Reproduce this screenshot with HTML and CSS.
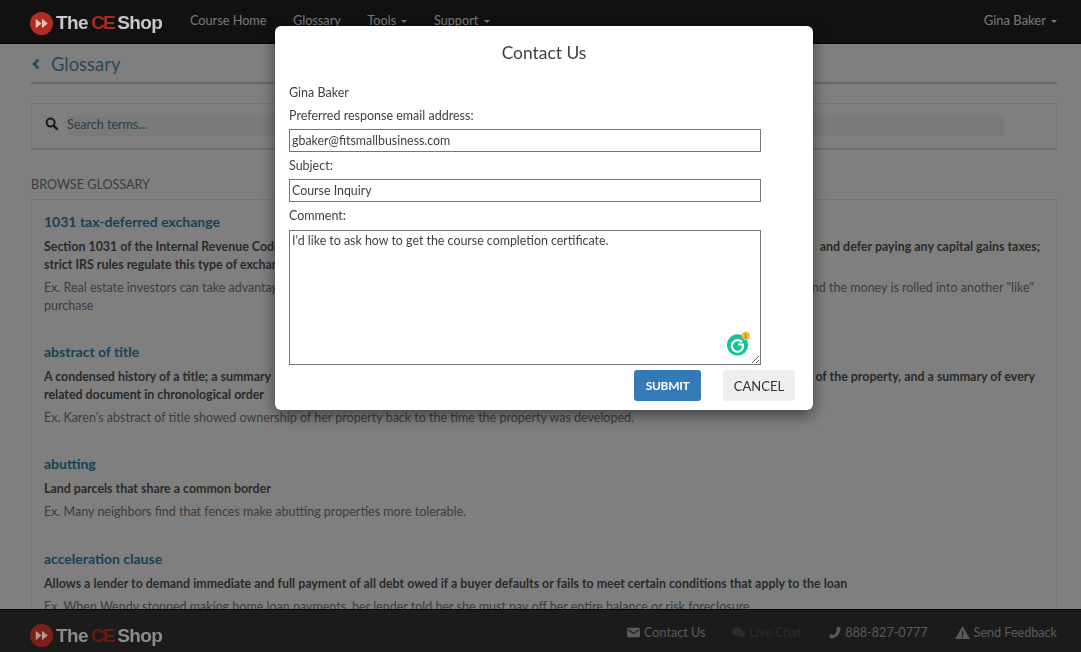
FILE: index.html
```html
<!DOCTYPE html>
<html lang="en">
<head>
<meta charset="utf-8">
<title>Glossary</title>
<link rel="stylesheet" href="styles.css">
</head>
<body>
<div class="page">
  <header class="navbar">
    <div class="logo"><svg class="logo-mark" viewBox="0 0 24 24"><circle cx="12" cy="12" r="12" fill="currentColor"/><path d="M6 7l6 5-6 5zM12.500 7l6 5-6 5z" fill="#e3c4bc"/></svg><span class="logo-text">The <b>CE</b> Shop</span></div>
    <nav class="nav-links">
      <span>Course Home</span><span>Glossary</span><span>Tools <i class="caret"></i></span><span>Support <i class="caret"></i></span>
    </nav>
    <span class="nav-user">Gina Baker <i class="caret"></i></span>
  </header>
  <main class="content">
    <div class="title-row">
      <svg class="chev" viewBox="0 0 10 14"><path d="M7.500 2.500L3 7l4.500 4.500" fill="none" stroke="#4f9ac8" stroke-width="2.800"/></svg>
      <h1>Glossary</h1>
    </div>
    <div class="search-card">
      <svg class="search-icon" viewBox="0 0 14 14"><circle cx="5.600" cy="5.600" r="4" fill="none" stroke="#333" stroke-width="2"/><path d="M8.600 8.600l4 4" stroke="#333" stroke-width="2.400"/></svg>
      <div class="search-input">Search terms...</div>
    </div>
    <h2 class="browse">BROWSE GLOSSARY</h2>
    <section class="terms">
      <article class="term">
        <h3>1031 tax-deferred exchange</h3>
        <p class="def split r-def"><span>Section 1031 of the Internal Revenue Code</span><span>and defer paying any capital gains taxes;</span></p>
        <p class="def">strict IRS rules regulate this type of exchange</p>
        <p class="ex split first r-ex"><span>Ex. Real estate investors can take advantage</span><span>nd the money is rolled into another "like"</span></p>
        <p class="ex">purchase</p>
      </article>
      <article class="term">
        <h3>abstract of title</h3>
        <p class="def split r-ab"><span>A condensed history of a title; a summary</span><span>of the property, and a summary of every</span></p>
        <p class="def">related document in chronological order</p>
        <p class="ex first">Ex. Karen's abstract of title showed ownership of her property back to the time the property was developed.</p>
      </article>
      <article class="term">
        <h3>abutting</h3>
        <p class="def">Land parcels that share a common border</p>
        <p class="ex first">Ex. Many neighbors find that fences make abutting properties more tolerable.</p>
      </article>
      <article class="term">
        <h3>acceleration clause</h3>
        <p class="def">Allows a lender to demand immediate and full payment of all debt owed if a buyer defaults or fails to meet certain conditions that apply to the loan</p>
        <p class="ex first">Ex. When Wendy stopped making home loan payments, her lender told her she must pay off her entire balance or risk foreclosure.</p>
      </article>
    </section>
  </main>
  <footer class="footer">
    <div class="logo foot-logo"><svg class="logo-mark" viewBox="0 0 24 24"><circle cx="12" cy="12" r="12" fill="currentColor"/><path d="M6 7l6 5-6 5zM12.500 7l6 5-6 5z" fill="#b09a94"/></svg><span class="logo-text">The <b>CE</b> Shop</span></div>
    <div class="foot-links">
      <span><svg class="ficon" viewBox="0 0 14 12"><rect y="1" width="14" height="10" rx="1.500" fill="currentColor"/><path d="M1 3l6 4 6-4" fill="none" stroke="#363636" stroke-width="1.200"/></svg>Contact Us</span>
      <span class="dim"><svg class="ficon" viewBox="0 0 14 12"><ellipse cx="5.500" cy="5" rx="5.500" ry="4.500" fill="currentColor"/><ellipse cx="10" cy="7.500" rx="4" ry="3.500" fill="currentColor"/></svg>Live Chat</span>
      <span><svg class="ficon" viewBox="0 0 14 14"><path d="M11 .5l2.500 1c.5 6-5 12-11 12l-1.500-3 3-2 1.500 1.500c2-1 3.500-3 4-5L8.500 3.500z" fill="currentColor"/></svg>888-827-0777</span>
      <span><svg class="ficon warn" viewBox="0 0 16 14"><path d="M8 0l8 14H0z" fill="currentColor"/><path d="M8 5v5M8 11v1.500" stroke="#363636" stroke-width="1.500"/></svg>Send Feedback</span>
    </div>
  </footer>
</div>
<div class="backdrop"></div>
<div class="modal">
  <h4>Contact Us</h4>
  <div class="modal-name">Gina Baker</div>
  <label class="field-label">Preferred response email address:</label>
  <div class="input">gbaker@fitsmallbusiness.com</div>
  <label class="field-label">Subject:</label>
  <div class="input">Course Inquiry</div>
  <label class="field-label">Comment:</label>
  <div class="textarea">I'd like to ask how to get the course completion certificate.
    <svg class="grammarly" viewBox="0 0 26 26"><circle cx="12" cy="14.500" r="11" fill="#15c39a"/><path d="M16.500 11.500a6 6 0 1 0 1 6.500V14h-5" fill="none" stroke="#fff" stroke-width="2.200"/><circle cx="20.500" cy="5" r="4.500" fill="#f5b840"/><text x="20.500" y="7.500" class="badge-num">1</text></svg>
    <svg class="grip" viewBox="0 0 10 10"><path d="M9 2L2 9M9 6L6 9" stroke="#666" stroke-width="1"/></svg>
  </div>
  <div class="modal-actions">
    <button class="btn primary">SUBMIT</button>
    <button class="btn plain">CANCEL</button>
  </div>
</div>
</body>
</html>
```
FILE: styles.css
```css
* { box-sizing: border-box; }
html, body { margin: 0; height: 100%; overflow: hidden; }
body { font-family: "Lato", "Liberation Sans", sans-serif; font-size: 12.5px; color: #333; background: #fff; }
.page { height: 652px; display: flex; flex-direction: column; }
.navbar { height: 44px; flex: none; background: #222; border-bottom: 1px solid #000; display: flex; align-items: center; padding: 0 24px 0 30px; color: #eee; }
.logo { position: relative; z-index: 2; display: flex; align-items: center; width: 160px; flex: none; margin-top: 3px; color: #b22a22; }
.logo-mark { width: 23px; height: 23px; flex: none; margin-right: 3px; }
.logo-text { font-family: "Liberation Sans", sans-serif; font-weight: 700; font-size: 19px; letter-spacing: -.6px; word-spacing: -1.500px; color: #c8c8c8; white-space: nowrap; }
.logo-text b { color: #a82a20; letter-spacing: -1.800px; }
.foot-logo { color: #7d201a; margin-top: 9px; }
.foot-logo .logo-text { color: #8c8c8c; }
.foot-logo b { color: #6a1a14; }
.nav-links { display: flex; gap: 26.500px; font-size: 12.700px; margin-top: -4px; }
.nav-user { margin-left: auto; font-size: 13px; margin-top: -4px; }
.caret { display: inline-block; border: 3px solid transparent; border-top-color: currentColor; border-bottom: 0; vertical-align: middle; margin-left: 2px; }
.content { flex: 1; min-height: 0; overflow: hidden; padding: 0 24px 0 31px; }
.title-row { display: flex; align-items: center; height: 40px; padding-top: 1px; border-bottom: 2px solid #ccc; }
.chev { width: 10px; height: 14px; margin-right: 10px; }
h1 { margin: 0; font-size: 18.400px; font-weight: 400; color: #5590b5; }
.search-card { margin-top: 19px; height: 47px; background: #fff; border: 1px solid #e8e8e8; border-bottom: 2px solid #ddd; display: flex; align-items: center; padding: 0 52px 0 13px; }
.search-icon { width: 14px; height: 14px; flex: none; margin: 0 8px 4px 0; }
.search-input { flex: 1; height: 20px; line-height: 17px; background: #f4f4f4; color: #4f7f9f; }
.browse { margin: 26px 0 0; font-size: 12.600px; font-weight: 400; line-height: 17px; color: #777; }
.terms { margin-top: 6px; background: #fff; border: 1px solid #e8e8e8; padding: 0 12px; height: 431px; overflow: hidden; }
.term { height: 130px; padding-top: 12px; }
.term:nth-child(2) { height: 112px; }
.term:nth-child(3) { height: 95px; }
h3 { margin: 0 0 6px; font-size: 14px; line-height: 20px; font-weight: 700; color: #2f83ad; }
p { margin: 0; line-height: 18px; }
.def { font-size: 12.400px; font-weight: 700; color: #555; }
.ex { font-size: 12.500px; color: #7a7a7a; }
.ex.first { margin-top: 5px; }
.split { display: flex; justify-content: space-between; white-space: nowrap; }
.r-def { padding-right: 4px; }
.r-ex { padding-right: 10px; }
.r-ab { padding-right: 9px; }
.footer { height: 43px; flex: none; background: #363636; border-top: 1px solid #000; display: flex; align-items: center; justify-content: space-between; padding: 0 24px 0 30px; }
.foot-links { display: flex; gap: 27px; color: #b4b4b4; font-size: 12.600px; margin-top: 2px; }
.foot-links span { display: flex; align-items: center; }
.foot-links .dim { color: #585858; }
.ficon { width: 13px; height: 13px; margin-right: 4px; }
.ficon.warn { width: 15px; }
.backdrop { position: fixed; inset: 0; background: rgba(0,0,0,.5); z-index: 1; }
.modal { position: fixed; left: 275px; top: 26px; width: 538px; height: 384px; background: #fff; border-radius: 6px; box-shadow: 0 5px 15px rgba(0,0,0,.5); z-index: 3; padding: 0 18px 0 14px; color: #3f3f3f; }
.modal h4 { margin: 0 -18px 0 -14px; height: 53px; line-height: 53px; text-align: center; font-size: 17.400px; font-weight: 400; }
.modal-name { line-height: 20px; height: 23px; margin-top: 4px; }
.field-label { display: block; line-height: 18px; height: 23px; padding-top: 1px; }
.input { width: 472px; height: 23px; border: 1px solid #767676; line-height: 21px; padding: 0 2px; margin-bottom: 4px; font-size: 12.400px; }
.textarea { position: relative; width: 472px; height: 135px; margin-top: 1px; border: 1px solid #767676; padding: 1px 2px; line-height: 18px; font-size: 12.400px; }
.grammarly { position: absolute; right: 9px; bottom: 8px; width: 25px; height: 25px; }
.badge-num { font-size: 6px; fill: #7a5a10; text-anchor: middle; }
.grip { position: absolute; right: 0; bottom: 0; width: 10px; height: 10px; }
.modal-actions { display: flex; justify-content: flex-end; gap: 22px; margin-top: 5px; }
.btn { height: 31px; border: 0; border-radius: 3px; font: inherit; padding: 0; }
.primary { width: 67px; background: #337ab7; color: #fff; font-weight: 700; font-size: 12px; letter-spacing: -.3px; }
.plain { width: 72px; background: #eee; color: #333; font-size: 13px; }
```
